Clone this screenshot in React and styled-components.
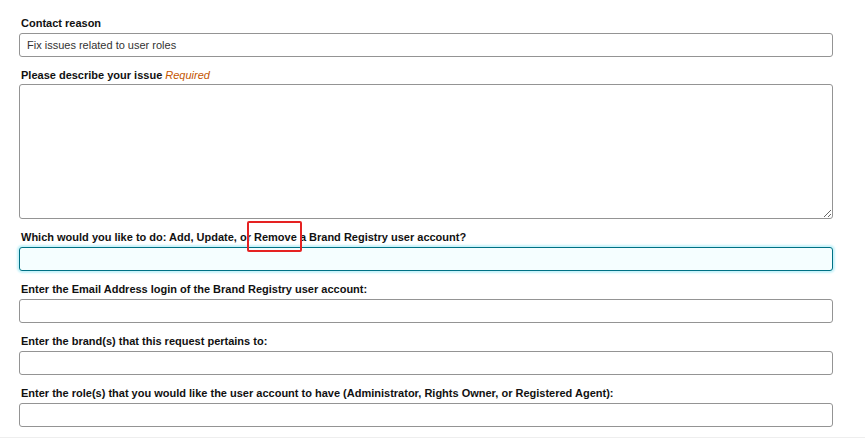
import styled, { createGlobalStyle } from 'styled-components';

const GlobalStyle = createGlobalStyle`
  body {
    margin: 0;
    overflow: hidden;
    background: #fff;
    font-family: "Liberation Sans", Arial, sans-serif;
    color: #111;
  }
`;

const fields = [
  { id: 'email', label: 'Enter the Email Address login of the Brand Registry user account:' },
  { id: 'brand', label: 'Enter the brand(s) that this request pertains to:' },
  {
    id: 'role',
    label:
      'Enter the role(s) that you would like the user account to have (Administrator, Rights Owner, or Registered Agent):',
  },
];

function App() {
  return (
    <>
      <GlobalStyle />
      <Form>
        <Group>
          <Label>Contact reason</Label>
          <Input defaultValue="Fix issues related to user roles" readOnly />
        </Group>

        <Group $gap={1}>
          <Label>
            Please describe your issue <Required>Required</Required>
          </Label>
          <TextArea />
        </Group>

        <Group>
          <Label>
            Which would you like to do: Add, Update, or{' '}
            <Marked>Remove</Marked> a Brand Registry user account?
          </Label>
          <Input $focused />
        </Group>

        {fields.map((f) => (
          <Group key={f.id}>
            <Label>{f.label}</Label>
            <Input />
          </Group>
        ))}
        <Footer />
      </Form>
    </>
  );
}

const Form = styled.div`
  padding: 15px 32px 0 19px;
`;

const Group = styled.div`
  display: flex;
  flex-direction: column;
  gap: ${(p) => p.$gap ?? 2}px;
  margin-bottom: 10px;
`;

const Label = styled.label`
  display: block;
  height: 16px;
  font-size: 11px;
  line-height: 16px;
  font-weight: bold;
  padding-left: 2px;
  color: #111;
`;

const Required = styled.em`
  font-weight: normal;
  color: #c45500;
`;

const Marked = styled.span`
  position: relative;

  &::after {
    content: '';
    position: absolute;
    left: -7px;
    right: -5px;
    top: -10px;
    bottom: -9px;
    border: 2px solid #e52222;
    border-radius: 2px;
  }
`;

const Input = styled.input`
  box-sizing: border-box;
  width: 100%;
  height: 24px;
  margin: 0;
  padding: 0 7px;
  font-family: inherit;
  font-size: 11px;
  color: #333;
  border: 1px solid ${(p) => (p.$focused ? '#007185' : '#949494')};
  border-radius: 3px;
  background: ${(p) => (p.$focused ? '#f5feff' : '#fff')};
  box-shadow: ${(p) => (p.$focused ? '0 0 2px 2px #c8f3fa' : 'none')};
  outline: none;
`;

const TextArea = styled.textarea`
  box-sizing: border-box;
  display: block;
  width: 100%;
  height: 135px;
  margin: 0;
  padding: 4px 7px;
  font-family: inherit;
  font-size: 11px;
  border: 1px solid #949494;
  border-radius: 3px;
  resize: vertical;
  outline: none;
`;

const Footer = styled.div`
  border-top: 1px solid #eee;
  margin-left: -19px;
  margin-right: -32px;
`;

export default App;
